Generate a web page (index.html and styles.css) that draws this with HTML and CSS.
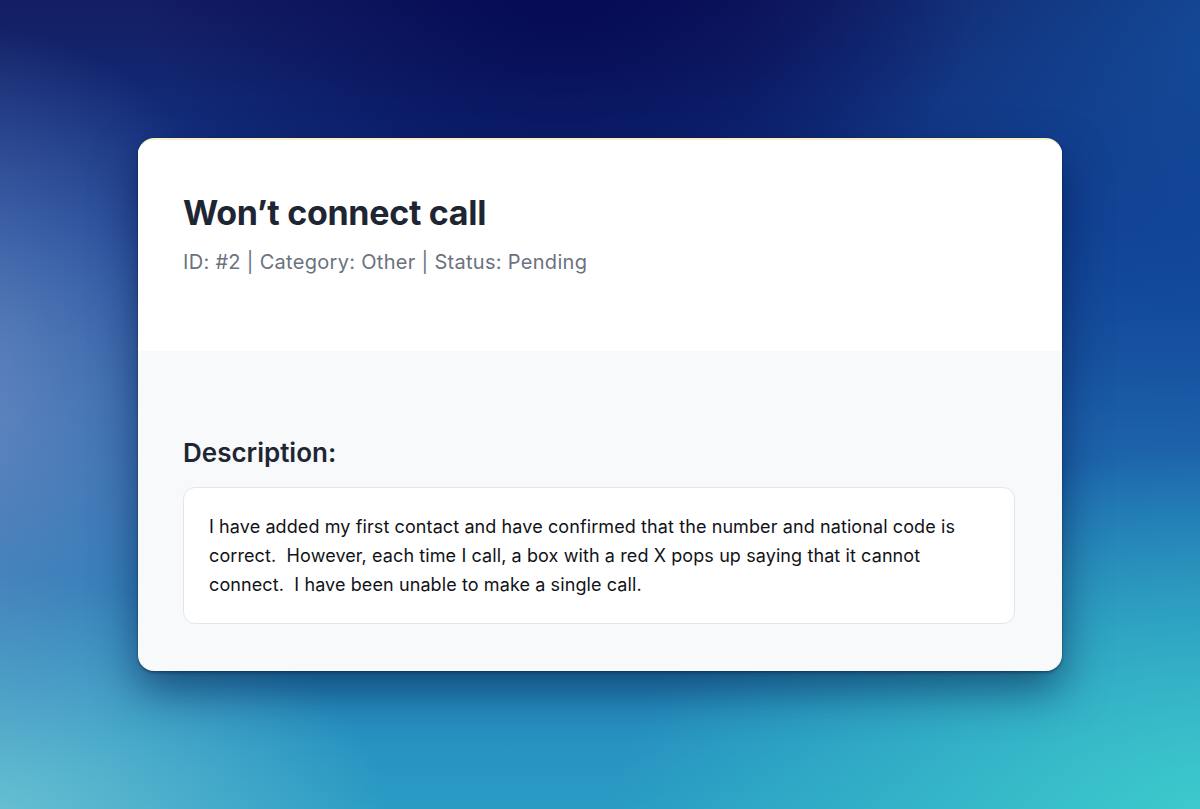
FILE: index.html
```html
<!DOCTYPE html>
<html lang="en">
<head>
<meta charset="utf-8">
<title>Ticket</title>
<link rel="stylesheet" href="styles.css">
</head>
<body>
<main class="stage">
  <article class="card">
    <header class="card-head">
      <h1 class="title">Won’t connect call</h1>
      <p class="meta">ID: #2 | Category: Other | Status: Pending</p>
    </header>
    <section class="card-body">
      <h2 class="label">Description:</h2>
      <div class="desc">I have added my first contact and have confirmed that the number and national code is correct.&nbsp; However, each time I call, a box with a red X pops up saying that it cannot connect.&nbsp; I have been unable to make a single call.</div>
    </section>
  </article>
</main>
</body>
</html>
```
FILE: styles.css
```css
html, body {
  margin: 0;
  padding: 0;
  height: 100%;
}
body {
  font-family: Inter, "Noto Sans", "Liberation Sans", sans-serif;
  background-color: #1c4a9a;
  background-image:
    radial-gradient(ellipse 420px 300px at 560px -20px, rgba(4, 10, 84, 1), rgba(4, 10, 84, 0) 100%),
    radial-gradient(ellipse 360px 380px at -60px 400px, rgba(112, 142, 196, 0.9), rgba(112, 142, 196, 0) 100%),
    radial-gradient(ellipse 620px 380px at 1230px 830px, rgba(62, 205, 205, 1), rgba(62, 205, 205, 0) 100%),
    radial-gradient(ellipse 420px 260px at -30px 830px, rgba(112, 196, 212, 0.95), rgba(112, 196, 212, 0) 100%),
    radial-gradient(ellipse 520px 420px at 1260px 40px, rgba(18, 84, 164, 0.85), rgba(18, 84, 164, 0) 100%),
    linear-gradient(180deg, #141d62 0%, #10388c 28%, #1b5ea8 52%, #2282ba 78%, #2a9cc4 100%);
  overflow: hidden;
}
.stage {
  height: 809px;
  display: flex;
  align-items: flex-start;
  justify-content: center;
  padding-top: 138px;
  box-sizing: border-box;
}
.card {
  width: 924px;
  height: 533px;
  border-radius: 16px;
  overflow: hidden;
  background: #f8f9fb;
  box-shadow: 0 0 0 1px rgba(0, 0, 0, 0.05), 0 20px 44px rgba(0, 12, 60, 0.5), 0 2px 3px rgba(0, 0, 0, 0.3);
  border-top: 2px solid #fbefc4;
  box-sizing: border-box;
  display: flex;
  flex-direction: column;
}
.card-head {
  background: #ffffff;
  padding: 53px 45px 0;
  height: 211px;
  box-sizing: border-box;
}
.title {
  margin: 0;
  font-size: 34px;
  line-height: 40px;
  font-weight: 700;
  color: #1e2633;
  letter-spacing: -0.3px;
}
.meta {
  margin: 15px 0 0;
  font-size: 20px;
  line-height: 28px;
  color: #6b7280;
  font-weight: 400;
  letter-spacing: 0.3px;
}
.card-body {
  flex: 1;
  padding: 86px 47px 0 45px;
}
.label {
  margin: 0 0 18px;
  font-size: 26px;
  line-height: 32px;
  font-weight: 600;
  color: #1e2633;
}
.desc {
  background: #ffffff;
  border: 1px solid #e3e5e9;
  border-radius: 12px;
  padding: 24px 40px 24px 25px;
  font-size: 18px;
  line-height: 29px;
  color: #111318;
  letter-spacing: 0.1px;
}
```
